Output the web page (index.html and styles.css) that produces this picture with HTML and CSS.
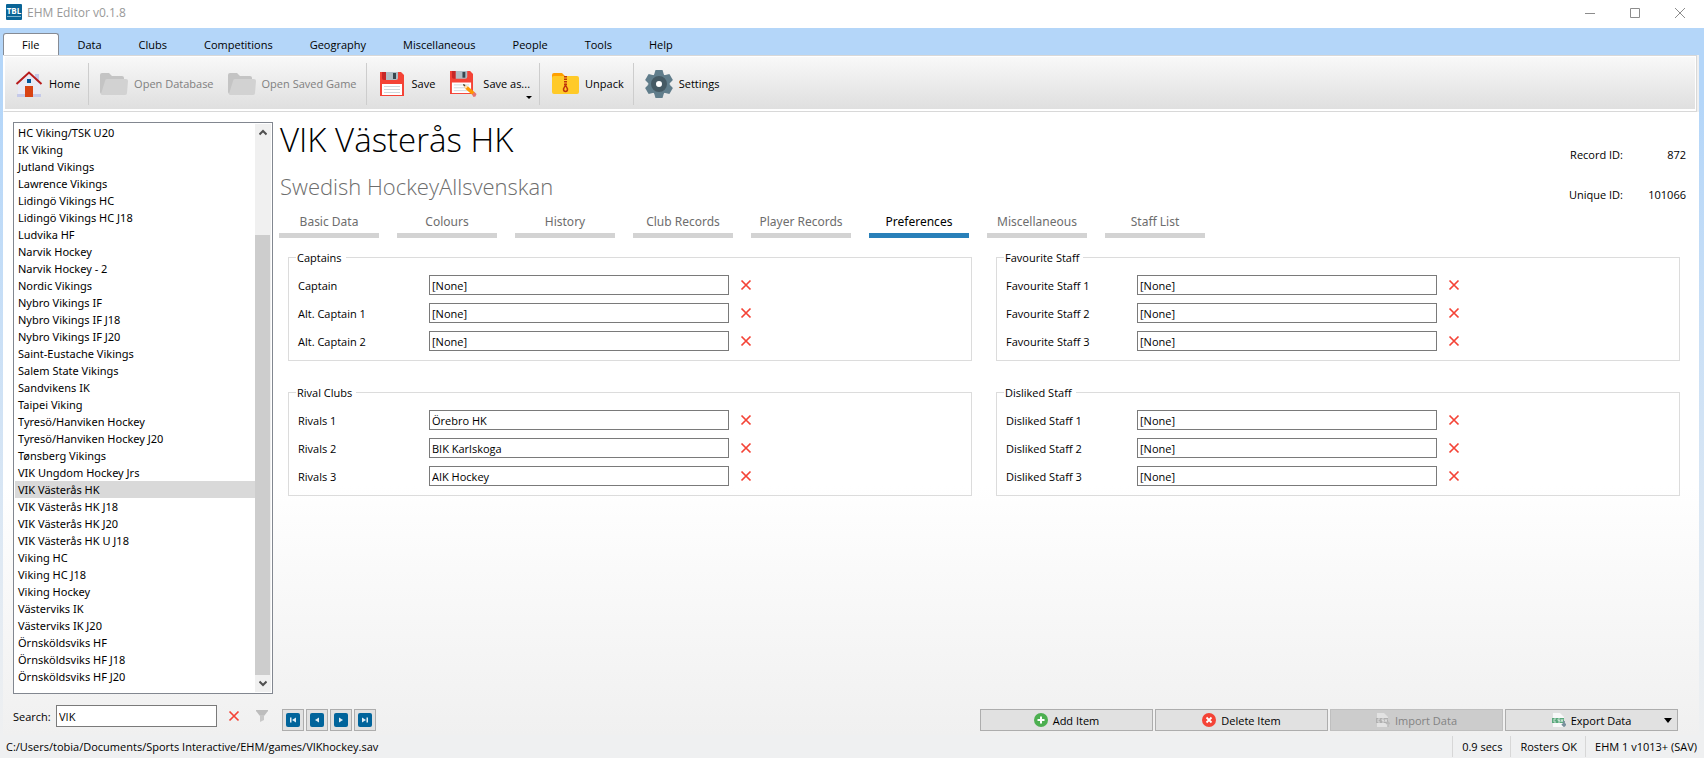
FILE: index.html
```html
<!DOCTYPE html>
<html lang="en">
<head>
  <meta charset="UTF-8" />
  <meta name="viewport" content="width=device-width,initial-scale=1.0"/>
  <title>EHM Editor v0.1.8</title>
  <link rel="stylesheet" href="styles.css">
</head>
<body>
  <!-- shared icons -->
  <svg class="sprite" aria-hidden="true">
    <symbol id="icon-cross" viewBox="0 0 12 12">
      <path d="M1.5 1.5l9 9M10.5 1.5l-9 9" stroke="#f44336" stroke-width="1.7" fill="none"/>
    </symbol>
    <symbol id="icon-folder" viewBox="0 0 28 24">
      <path d="M0 3q0-2 2-2h7l3 3h10q2 0 2 2v16H2q-2 0-2-2z" fill="#c4c4c4"/>
      <path d="M7 7h19q2 0 2 2l-1 12q0 2-2 2H2q-1 0-1-1L5 9q0-2 2-2z" fill="#d2d2d2"/>
    </symbol>
    <symbol id="icon-floppy" viewBox="0 0 24 24">
      <path d="M0 0h21l3 3v21H0z" fill="#f44336"/>
      <path d="M2 0h4v8H4q-2 0-2-2z" fill="#c62828"/>
      <path d="M6 0h12v6q0 2-2 2H6z" fill="#b0bec5"/>
      <path d="M13 1h3v6h-3z" fill="#37474f"/>
      <path d="M2 12h20v11H2z" fill="#fff"/>
      <path d="M4 14.5h16M4 17.5h16M4 20.5h16" stroke="#cfd8dc"/>
    </symbol>
  </svg>

  <header class="titlebar">
    <svg class="app-icon" width="16" height="16" viewBox="0 0 16 16">
      <rect width="16" height="16" rx="1" fill="#0a6496"/>
      <path d="M1 12.5h14" stroke="#7fb4d0"/>
      <text x="8" y="10" text-anchor="middle" class="app-icon-text">TBL</text>
    </svg>
    <h1 class="app-title">EHM Editor v0.1.8</h1>
    <div class="window-controls">
      <button type="button" aria-label="Minimize"><svg width="12" height="12" viewBox="0 0 12 12"><path d="M1 6.5h10"/></svg></button>
      <button type="button" aria-label="Maximize"><svg width="12" height="12" viewBox="0 0 12 12"><path d="M1.500 1.500h9v9h-9z"/></svg></button>
      <button type="button" aria-label="Close"><svg width="12" height="12" viewBox="0 0 12 12"><path d="M1 1l10 10M11 1L1 11"/></svg></button>
    </div>
  </header>

  <div class="window">
    <nav class="menu">
      <button type="button" class="menu-tab active">File</button>
      <button type="button" class="menu-tab">Data</button>
      <button type="button" class="menu-tab">Clubs</button>
      <button type="button" class="menu-tab">Competitions</button>
      <button type="button" class="menu-tab">Geography</button>
      <button type="button" class="menu-tab">Miscellaneous</button>
      <button type="button" class="menu-tab">People</button>
      <button type="button" class="menu-tab">Tools</button>
      <button type="button" class="menu-tab">Help</button>
    </nav>

    <div class="toolbar">
      <div class="tool-group">
        <button type="button" class="tool">
          <svg width="28" height="28" viewBox="0 0 28 28">
            <path d="M20 4h4v9h-4z" fill="#c5cae9"/>
            <path d="M3 14L14 4l11 10v13H3z" fill="#e8eaf6"/>
            <path d="M2 24h24v3H2z" fill="#c5cae9"/>
            <path d="M10 16h8v11h-8z" fill="#d84315"/>
            <path d="M12 9h4v4h-4z" fill="#01579b"/>
            <path d="M1.500 14L14 2.500 26.500 14" stroke="#b71c1c" stroke-width="2" fill="none"/>
          </svg>
          <span>Home</span>
        </button>
      </div>
      <div class="tool-group">
        <button type="button" class="tool" disabled><svg width="28" height="24"><use href="#icon-folder"/></svg><span>Open Database</span></button>
        <button type="button" class="tool" disabled><svg width="28" height="24"><use href="#icon-folder"/></svg><span>Open Saved Game</span></button>
      </div>
      <div class="tool-group">
        <button type="button" class="tool"><svg width="28" height="24"><use href="#icon-floppy"/></svg><span>Save</span></button>
        <button type="button" class="tool tool-menu">
          <svg width="28" height="28" viewBox="0 0 28 28">
            <use href="#icon-floppy" x="1" y="1" width="23" height="23"/>
            <path d="M14 14l2.500 5 7 6 2.500-2.500-7-6z" fill="#ff9800"/>
            <path d="M14 14l5 2.500-2.500 2.500z" fill="#ffe0b2"/>
            <path d="M14 14l2.500 1-1.500 1.500z" fill="#263238"/>
            <path d="M23 24.500l2.500-2.500 2 2-1 2.500-2 .5z" fill="#e57373"/>
          </svg>
          <span>Save as...</span>
        </button>
      </div>
      <div class="tool-group">
        <button type="button" class="tool">
          <svg width="28" height="24" viewBox="0 0 28 24">
            <path d="M1 3q0-2 2-2h8l3 3h9v7H1z" fill="#ffa000"/>
            <path d="M3 4h23q2 0 2 2v14q0 2-2 2H3q-2 0-2-2V6q0-2 2-2z" fill="#ffca28"/>
            <path d="M14.500 4v11" stroke="#bf360c" stroke-width="3" stroke-dasharray="1.500 1"/>
            <path d="M14.500 13l2 4q0 2.500-2 2.500t-2-2.500z" stroke="#bf360c" stroke-width="1.500" fill="none"/>
          </svg>
          <span>Unpack</span>
        </button>
      </div>
      <div class="tool-group">
        <button type="button" class="tool">
          <svg width="28" height="28" viewBox="-14 -14 28 28">
            <g fill="#607d8b">
              <circle r="10.500"/>
              <path id="tooth" d="M-5 -9l1.500-5h7L5 -9V9l-1.500 5h-7L-5 9z"/>
              <use href="#tooth" transform="rotate(60)"/>
              <use href="#tooth" transform="rotate(120)"/>
            </g>
            <circle r="5.500" fill="#fff" stroke="#455a64" stroke-width="5"/>
          </svg>
          <span>Settings</span>
        </button>
      </div>
    </div>

    <main class="workspace">
      <aside class="sidebar">
        <div class="club-list">
          <ul role="listbox" aria-label="Clubs">
            <li role="option">HC Viking/TSK U20</li>
            <li role="option">IK Viking</li>
            <li role="option">Jutland Vikings</li>
            <li role="option">Lawrence Vikings</li>
            <li role="option">Lidingö Vikings HC</li>
            <li role="option">Lidingö Vikings HC J18</li>
            <li role="option">Ludvika HF</li>
            <li role="option">Narvik Hockey</li>
            <li role="option">Narvik Hockey - 2</li>
            <li role="option">Nordic Vikings</li>
            <li role="option">Nybro Vikings IF</li>
            <li role="option">Nybro Vikings IF J18</li>
            <li role="option">Nybro Vikings IF J20</li>
            <li role="option">Saint-Eustache Vikings</li>
            <li role="option">Salem State Vikings</li>
            <li role="option">Sandvikens IK</li>
            <li role="option">Taipei Viking</li>
            <li role="option">Tyresö/Hanviken Hockey</li>
            <li role="option">Tyresö/Hanviken Hockey J20</li>
            <li role="option">Tønsberg Vikings</li>
            <li role="option">VIK Ungdom Hockey Jrs</li>
            <li role="option" class="selected" aria-selected="true">VIK Västerås HK</li>
            <li role="option">VIK Västerås HK J18</li>
            <li role="option">VIK Västerås HK J20</li>
            <li role="option">VIK Västerås HK U J18</li>
            <li role="option">Viking HC</li>
            <li role="option">Viking HC J18</li>
            <li role="option">Viking Hockey</li>
            <li role="option">Västerviks IK</li>
            <li role="option">Västerviks IK J20</li>
            <li role="option">Örnsköldsviks HF</li>
            <li role="option">Örnsköldsviks HF J18</li>
            <li role="option">Örnsköldsviks HF J20</li>
          </ul>
          <div class="scrollbar">
            <button type="button" aria-label="Scroll up"><svg width="8" height="7" viewBox="0 0 8 7"><path d="M.5 5.500L4 2l3.500 3.500"/></svg></button>
            <div class="track"><div class="thumb"></div></div>
            <button type="button" aria-label="Scroll down"><svg width="8" height="7" viewBox="0 0 8 7"><path d="M.5 1.500L4 5l3.500-3.500"/></svg></button>
          </div>
        </div>
        <div class="search">
          <label for="search">Search:</label>
          <input type="text" id="search" class="text-box" value="VIK">
          <button type="button" class="icon-btn" aria-label="Clear search"><svg width="12" height="12"><use href="#icon-cross"/></svg></button>
          <button type="button" class="icon-btn" aria-label="Filter"><svg width="14" height="14" viewBox="0 0 14 14"><path d="M1 1h12v1L9 7H5L1 2z" fill="#bdbdbd"/><path d="M5 6h4v5l-4 2z" fill="#c8c8c8"/></svg></button>
        </div>
      </aside>

      <section class="editor">
        <div class="record-head">
          <div class="record-title">
            <h2>VIK Västerås HK</h2>
            <p>Swedish HockeyAllsvenskan</p>
          </div>
          <dl class="record-ids">
            <dt>Record ID:</dt><dd>872</dd>
            <dt>Unique ID:</dt><dd>101066</dd>
          </dl>
        </div>

        <nav class="tabs">
          <button type="button" class="tab">Basic Data</button>
          <button type="button" class="tab">Colours</button>
          <button type="button" class="tab">History</button>
          <button type="button" class="tab">Club Records</button>
          <button type="button" class="tab">Player Records</button>
          <button type="button" class="tab active">Preferences</button>
          <button type="button" class="tab">Miscellaneous</button>
          <button type="button" class="tab">Staff List</button>
        </nav>

        <form class="panels">
          <fieldset>
            <legend>Captains</legend>
            <div class="field"><label for="captain">Captain</label><input type="text" id="captain" class="text-box" value="[None]"><button type="button" class="icon-btn" aria-label="Clear captain"><svg width="12" height="12"><use href="#icon-cross"/></svg></button></div>
            <div class="field"><label for="alt1">Alt. Captain 1</label><input type="text" id="alt1" class="text-box" value="[None]"><button type="button" class="icon-btn" aria-label="Clear alt. captain 1"><svg width="12" height="12"><use href="#icon-cross"/></svg></button></div>
            <div class="field"><label for="alt2">Alt. Captain 2</label><input type="text" id="alt2" class="text-box" value="[None]"><button type="button" class="icon-btn" aria-label="Clear alt. captain 2"><svg width="12" height="12"><use href="#icon-cross"/></svg></button></div>
          </fieldset>
          <fieldset>
            <legend>Favourite Staff</legend>
            <div class="field"><label for="fav1">Favourite Staff 1</label><input type="text" id="fav1" class="text-box" value="[None]"><button type="button" class="icon-btn" aria-label="Clear favourite staff 1"><svg width="12" height="12"><use href="#icon-cross"/></svg></button></div>
            <div class="field"><label for="fav2">Favourite Staff 2</label><input type="text" id="fav2" class="text-box" value="[None]"><button type="button" class="icon-btn" aria-label="Clear favourite staff 2"><svg width="12" height="12"><use href="#icon-cross"/></svg></button></div>
            <div class="field"><label for="fav3">Favourite Staff 3</label><input type="text" id="fav3" class="text-box" value="[None]"><button type="button" class="icon-btn" aria-label="Clear favourite staff 3"><svg width="12" height="12"><use href="#icon-cross"/></svg></button></div>
          </fieldset>
          <fieldset>
            <legend>Rival Clubs</legend>
            <div class="field"><label for="rival1">Rivals 1</label><input type="text" id="rival1" class="text-box" value="Örebro HK"><button type="button" class="icon-btn" aria-label="Clear rivals 1"><svg width="12" height="12"><use href="#icon-cross"/></svg></button></div>
            <div class="field"><label for="rival2">Rivals 2</label><input type="text" id="rival2" class="text-box" value="BIK Karlskoga"><button type="button" class="icon-btn" aria-label="Clear rivals 2"><svg width="12" height="12"><use href="#icon-cross"/></svg></button></div>
            <div class="field"><label for="rival3">Rivals 3</label><input type="text" id="rival3" class="text-box" value="AIK Hockey"><button type="button" class="icon-btn" aria-label="Clear rivals 3"><svg width="12" height="12"><use href="#icon-cross"/></svg></button></div>
          </fieldset>
          <fieldset>
            <legend>Disliked Staff</legend>
            <div class="field"><label for="dis1">Disliked Staff 1</label><input type="text" id="dis1" class="text-box" value="[None]"><button type="button" class="icon-btn" aria-label="Clear disliked staff 1"><svg width="12" height="12"><use href="#icon-cross"/></svg></button></div>
            <div class="field"><label for="dis2">Disliked Staff 2</label><input type="text" id="dis2" class="text-box" value="[None]"><button type="button" class="icon-btn" aria-label="Clear disliked staff 2"><svg width="12" height="12"><use href="#icon-cross"/></svg></button></div>
            <div class="field"><label for="dis3">Disliked Staff 3</label><input type="text" id="dis3" class="text-box" value="[None]"><button type="button" class="icon-btn" aria-label="Clear disliked staff 3"><svg width="12" height="12"><use href="#icon-cross"/></svg></button></div>
          </fieldset>
        </form>

        <footer class="actions">
          <div class="record-nav">
            <button type="button" aria-label="First"><svg width="14" height="14" viewBox="0 0 14 14"><rect width="14" height="14" rx="2" fill="#01649b"/><path d="M4 4.500h1.500v5H4zM10 4.500v5L6 7z" fill="#e1eef5"/></svg></button>
            <button type="button" aria-label="Previous"><svg width="14" height="14" viewBox="0 0 14 14"><rect width="14" height="14" rx="2" fill="#01649b"/><path d="M9 4.500v5L5 7z" fill="#e1eef5"/></svg></button>
            <button type="button" aria-label="Next"><svg width="14" height="14" viewBox="0 0 14 14"><rect width="14" height="14" rx="2" fill="#01649b"/><path d="M5 4.500v5L9 7z" fill="#e1eef5"/></svg></button>
            <button type="button" aria-label="Last"><svg width="14" height="14" viewBox="0 0 14 14"><rect width="14" height="14" rx="2" fill="#01649b"/><path d="M4 4.500v5L8 7zM8.500 4.500H10v5H8.500z" fill="#e1eef5"/></svg></button>
          </div>
          <div class="item-actions">
            <button type="button" class="action"><svg width="14" height="14" viewBox="0 0 14 14"><circle cx="7" cy="7" r="7" fill="#4caf50"/><path d="M7 3.500v7M3.500 7h7" stroke="#fff" stroke-width="2"/></svg>Add Item</button>
            <button type="button" class="action"><svg width="14" height="14" viewBox="0 0 14 14"><circle cx="7" cy="7" r="7" fill="#f44336"/><path d="M4.500 4.500l5 5M9.500 4.500l-5 5" stroke="#fff" stroke-width="1.800"/></svg>Delete Item</button>
            <button type="button" class="action" disabled><svg width="14" height="14" viewBox="0 0 14 14"><path d="M1 0h7l4 4v10H1z" fill="#e2e2e2"/><path d="M0 5h12v5H0z" fill="#b0b0b0"/><path d="M4 6H2v3h2M8 6H6v1.500h2V9H6M9 6l1 3 1-3" stroke="#dcdcdc" fill="none"/><path d="M12 14V9M10 11l2-2 2 2" stroke="#bababa" stroke-width="1.500" fill="none"/></svg>Import Data</button>
            <button type="button" class="action drop"><svg width="14" height="14" viewBox="0 0 14 14"><path d="M1 0h7l4 4v10H1z" fill="#f8f8f8"/><path d="M0 5h12v5H0z" fill="#5aa87c"/><path d="M4 6H2v3h2M8 6H6v1.500h2V9H6M9 6l1 3 1-3" stroke="#c9e3d4" fill="none"/><path d="M12 8v5M10 11l2 2 2-2" stroke="#78909c" stroke-width="1.800" fill="none"/></svg>Export Data</button>
          </div>
        </footer>
      </section>
    </main>
  </div>

  <footer class="statusbar">
    <span class="path">C:/Users/tobia/Documents/Sports Interactive/EHM/games/VIKhockey.sav</span>
    <span class="status">0.9 secs</span>
    <span class="status">Rosters OK</span>
    <span class="status">EHM 1 v1013+ (SAV)</span>
  </footer>
</body>
</html>
```
FILE: styles.css
```css
:root {
  --frame-blue: #b4d6f9;
  --accent: #2980b9;
  --muted: #6d6d6d;
  --line: #dcdcdc;
  --box-border: #7a7a7a;
}
* { margin: 0; padding: 0; box-sizing: border-box; }
body {
  font-family: 'Open Sans', 'Noto Sans', sans-serif;
  font-size: 11px;
  line-height: 17px;
  color: #000;
  display: flex;
  flex-direction: column;
  min-height: 100vh;
  background: #eff0f1;
}
button, input { font: inherit; color: inherit; }
button { background: none; border: none; }
svg { display: block; flex: none; }
.sprite { position: absolute; width: 0; height: 0; }

/* title bar */
.titlebar { display: flex; align-items: center; height: 28px; padding: 0 2px 0 6px; background: #fff; }
.app-icon { margin-bottom: 4px; }
.app-icon-text { font-size: 8px; font-weight: 700; fill: #fff; }
.app-title { flex: 1; margin: 0 0 3px 5px; font-size: 12px; font-weight: 400; color: #999; }
.window-controls { display: flex; margin-bottom: 3px; }
.window-controls button { width: 45px; height: 24px; display: flex; align-items: center; justify-content: center; }
.window-controls path { stroke: #8c8c8c; fill: none; }

/* window frame */
.window {
  flex: 1;
  display: flex;
  flex-direction: column;
  padding: 5px 5px 0 3px;
  background: linear-gradient(var(--frame-blue) 10%, #eff0f1);
}
.menu { display: flex; height: 22px; }
.menu-tab { height: 22px; padding: 0 18px 0 17px; border: 1px solid transparent; border-bottom: none; }
.menu-tab.active { padding: 0 19px 0 18px; background: #fff; border-color: #868b94; border-radius: 3px 3px 0 0; }

.toolbar {
  display: flex;
  align-items: center;
  height: 57px;
  margin-right: 2px;
  border: 1px solid #d8d8d8;
  border-left-color: #fff;
  background: linear-gradient(#f9f9f9, #dedede);
  box-shadow: 2px 0 #f0f0f0, inset 0 0 0 1px #fff, inset 0 -2px #fff;
}
.tool-group { display: flex; height: 42px; padding: 0 9px 0 11px; gap: 14px; border-right: 1px solid #cdcdcd; }
.tool-group:first-child { padding-right: 8px; }
.tool-group:last-child { border-right: none; }
.tool { display: flex; align-items: center; gap: 6px; }
.tool:disabled { color: #808080; }
.tool-menu { position: relative; }
.tool-menu::after {
  content: '';
  position: absolute;
  right: -2px;
  bottom: 6px;
  border: 3px solid transparent;
  border-top-color: #000;
  border-bottom: none;
}

/* sidebar */
.workspace {
  flex: 1;
  display: flex;
  gap: 6px;
  padding: 10px 19px 4px 10px;
  background: linear-gradient(#fff 60%, #f0f0f0);
}
.sidebar { width: 260px; display: flex; flex-direction: column; gap: 11px; }
.club-list { flex: 1; display: flex; padding: 1px; border: 1px solid #828790; background: #fff; }
.club-list ul { flex: 1; list-style: none; font-family: 'Noto Sans', 'Open Sans', sans-serif; }
.club-list li { height: 17px; padding-left: 3px; white-space: nowrap; }
.club-list .selected { background: #d9d9d9; }
.scrollbar { width: 16px; display: flex; flex-direction: column; background: #f0f0f0; }
.scrollbar button { height: 17px; display: flex; align-items: center; justify-content: center; }
.scrollbar path { stroke: #505050; stroke-width: 2; fill: none; }
.track { flex: 1; display: flex; flex-direction: column; }
.track::before { content: ''; flex: 3; }
.thumb { flex: 14; margin-right: 1px; background: #cdcdcd; }
.search { display: flex; align-items: center; height: 22px; margin-bottom: 4px; }
.search label { width: 43px; }
.search .text-box { width: 161px; height: 22px; margin-right: 11px; }
.text-box { border: 1px solid var(--box-border); background: #fff; padding: 0 2px; outline: none; }
.icon-btn { width: 12px; display: flex; justify-content: center; }
.search .icon-btn + .icon-btn { margin-left: 16px; }

/* record editor */
.editor { flex: 1; display: flex; flex-direction: column; }
.record-head { display: flex; justify-content: space-between; height: 89px; }
.record-title { padding-left: 1px; }
.record-title h2 { font-size: 33px; line-height: 36px; font-weight: 300; }
.record-title p { margin-top: 15px; font-size: 22px; line-height: 26px; font-weight: 300; color: var(--muted); }
.record-ids { display: grid; grid-template-columns: 66px 63px; grid-auto-rows: 40px; align-items: center; padding-top: 12px; margin-right: -6px; text-align: right; }
.tabs { display: flex; gap: 18px; }
.tab { width: 100px; height: 27px; padding-bottom: 2px; border-bottom: 5px solid #d3d3d3; font-family: 'Noto Sans', 'Open Sans', sans-serif; font-size: 12px; color: var(--muted); white-space: nowrap; }
.tab.active { border-color: var(--accent); color: #000; }

.panels { flex: 1; display: grid; grid-template-columns: 1fr 1fr; align-content: start; gap: 23px 24px; padding: 11px 0 0 9px; }
fieldset { border: 1px solid var(--line); padding: 9px 9px 1px; }
legend { padding: 0 4px 0 1px; margin-left: -2px; }
.field { display: flex; align-items: center; height: 20px; margin-bottom: 8px; }
.field label { width: 131px; }
.field .text-box { width: 300px; height: 20px; margin-right: 11px; }

.actions { display: flex; justify-content: space-between; padding-right: 2px; }
.record-nav, .item-actions { display: flex; gap: 2px; }
.record-nav { padding-left: 3px; }
.record-nav button, .action { height: 22px; border: 1px solid #adadad; background: #e1e1e1; display: flex; align-items: center; justify-content: center; }
.record-nav button { width: 22px; }
.action { position: relative; width: 173px; gap: 5px; }
.action:disabled { background: #ccc; border-color: #bfbfbf; color: #838383; }
.drop::after {
  content: '';
  position: absolute;
  right: 5px;
  top: 8px;
  border: 4px solid transparent;
  border-top: 5px solid #000;
  border-bottom: none;
}

/* status bar */
.statusbar { display: flex; align-items: center; height: 23px; padding: 0 7px 0 6px; }
.path { flex: 1; }
.status { padding: 2px 8px 2px 9px; border-left: 1px solid #d7d7d7; }
.status:last-child { padding-right: 0; }
```
